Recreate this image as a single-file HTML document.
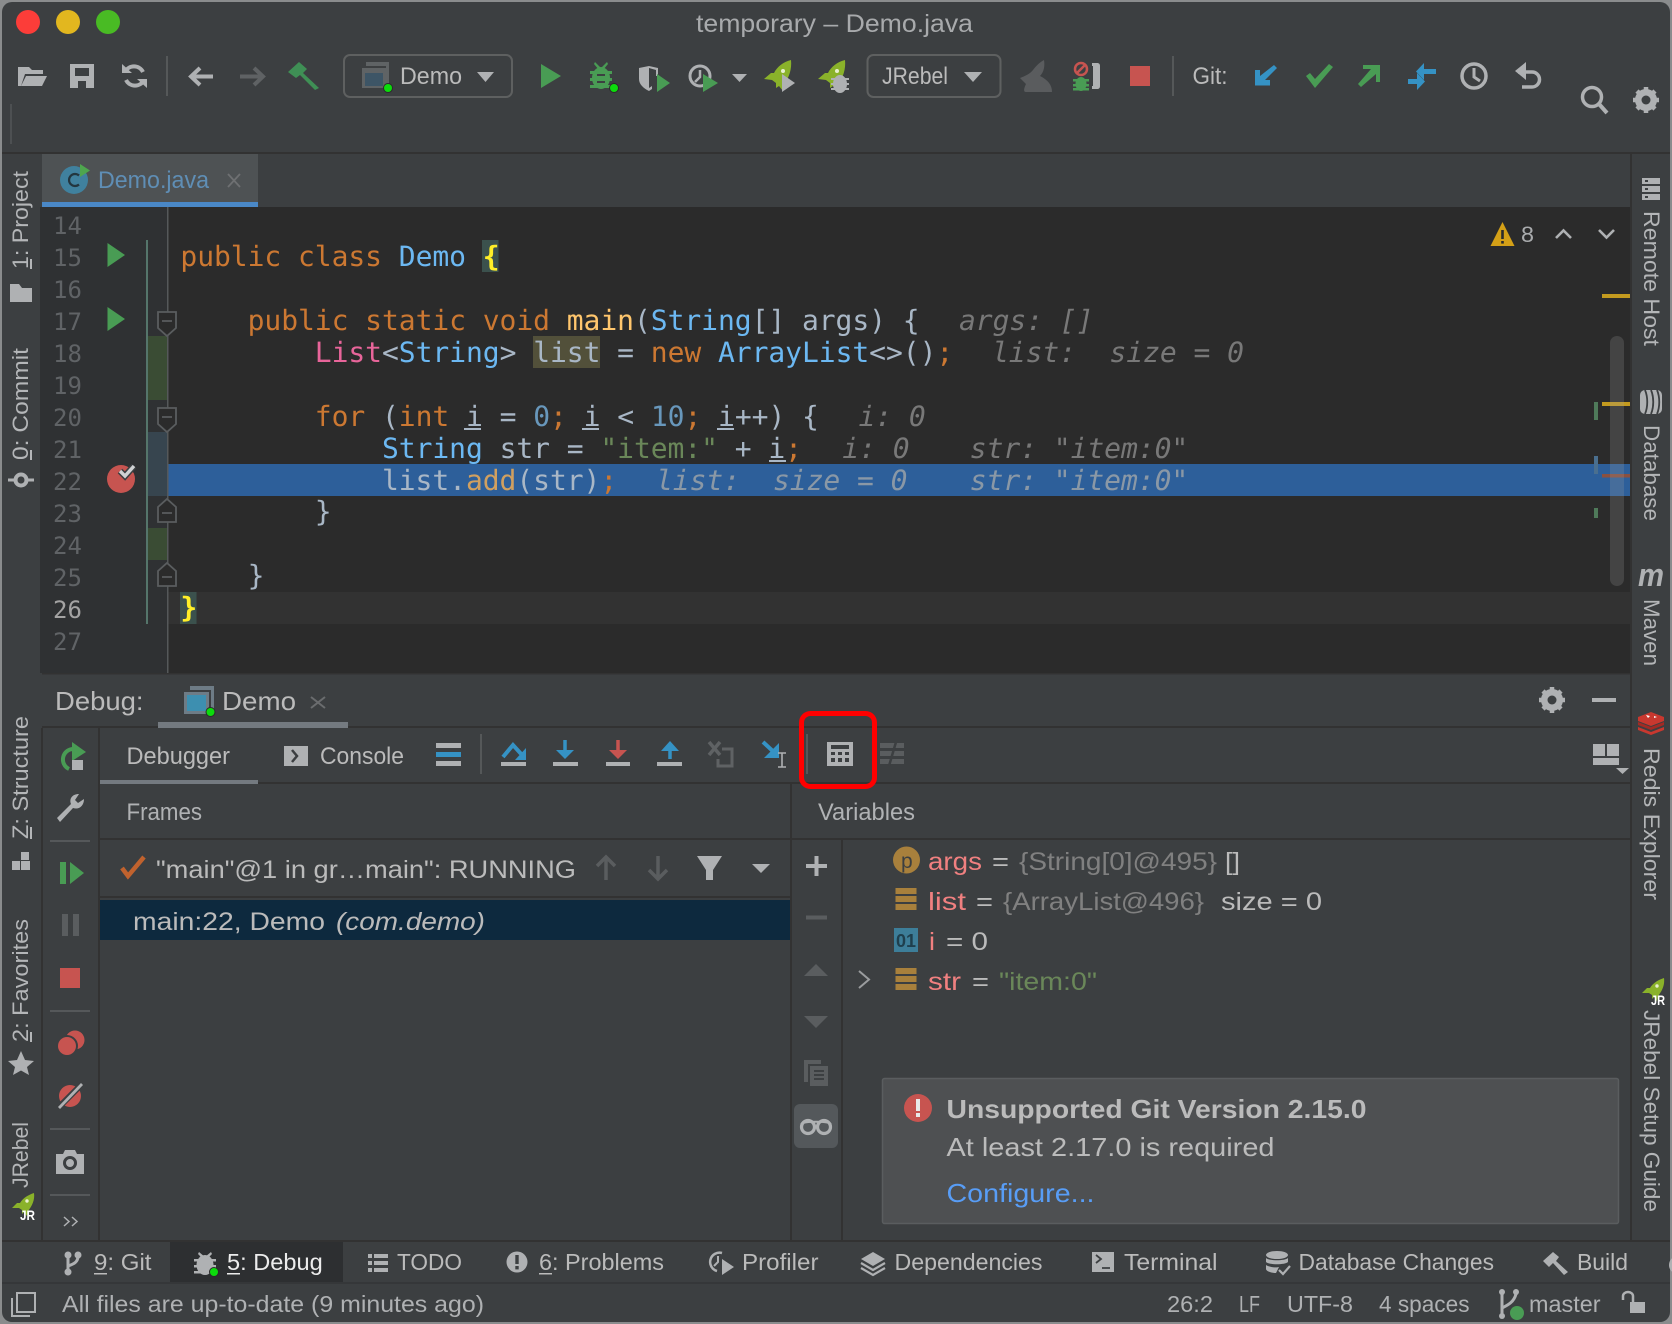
<!DOCTYPE html>
<html><head><meta charset="utf-8"><style>
html,body{margin:0;padding:0;background:#3c3f41;width:1672px;height:1324px;overflow:hidden}
svg{display:block}
text{font-family:"Liberation Sans",sans-serif;font-size:24px;fill:#bbbbbb;white-space:pre}
.c{font-family:"DejaVu Sans Mono","Liberation Mono",monospace;font-size:28px;fill:#a9b7c6;letter-spacing:-.06px;text-rendering:geometricPrecision}
.n{font-family:"DejaVu Sans Mono","Liberation Mono",monospace;font-size:24px;fill:#606366}
.k{fill:#cc7832}.b{fill:#6cb8f2}.p{fill:#e8659a}.f{fill:#ffc66d}.d{fill:#6897bb}.s{fill:#6a8759}.y{fill:#ffef28;font-weight:bold}
.h{fill:#787878;font-style:italic}
.side{font-size:22px;fill:#b4b6b8}
</style></head><body>
<svg width="1672" height="1324" viewBox="0 0 1672 1324" xmlns="http://www.w3.org/2000/svg">
<rect width="1672" height="1324" fill="#8a8c8d"/>
<rect x="2" y="2" width="1668" height="1320" rx="10" fill="#3c3f41"/>

<!-- title bar -->
<circle cx="28" cy="22" r="12" fill="#fc3d39"/><circle cx="68" cy="22" r="12" fill="#e2b71f"/><circle cx="108" cy="22" r="12" fill="#49bb24"/>
<text x="696" y="32" textLength="277" lengthAdjust="spacingAndGlyphs" style="fill:#a8aaac;font-size:25px">temporary – Demo.java</text>

<!-- toolbar -->
<g fill="#afb1b3">
<path d="M18 67h11l3 3h11v4H25l-4 12h-3z"/><path d="M26 76h21l-5 10H21z"/>
<path fill-rule="evenodd" d="M70 64h24v24H70zM75 68v8h14v-8zM78 81v7h8v-7z"/>
<g fill="none" stroke="#afb1b3" stroke-width="4"><path d="M125 72a10 10 0 0 1 18 0"/><path d="M144 80a10 10 0 0 1-18 0"/></g>
<path d="M122 64l10 9h-10zM147 88l-10-9h10z"/>
</g>
<rect x="166" y="56" width="2" height="40" fill="#555859"/>
<path d="M213 76.500H192M200 68l-9 8.500 9 8.500" fill="none" stroke="#afb1b3" stroke-width="4"/>
<path d="M240 76.500h22M254 68l9 8.500-9 8.500" fill="none" stroke="#5f6264" stroke-width="4"/>
<path d="M288 72l11-10 8 7-4 4 16 15-4 2-15-15-4 3z" fill="#3f8f55"/>
<rect x="344" y="55" width="168" height="42" rx="6" fill="none" stroke="#5e6060" stroke-width="2"/>
<path d="M366 62h23v24h-3V66h-20z" fill="#5f6365"/><rect x="362" y="68" width="24" height="20" fill="#5f6365"/><rect x="365" y="73" width="18" height="13" fill="#3d5566"/>
<circle cx="388" cy="88" r="5" fill="#2b2b2b"/><circle cx="388" cy="88" r="4" fill="#0cdc0c"/>
<text x="400" y="84" textLength="62" lengthAdjust="spacingAndGlyphs">Demo</text>
<path d="M477 72h17l-8.500 10z" fill="#afb1b3"/>
<path d="M541 64l20 12-20 12z" fill="#499c54"/>
<g fill="#499c54"><ellipse cx="601" cy="78" rx="9" ry="11"/><rect x="590" y="71" width="22" height="3"/><rect x="590" y="78" width="22" height="3"/><rect x="590" y="85" width="22" height="3"/><path d="M595 62l6 6 6-6 1 2-5 6h-4l-5-6z"/></g>
<rect x="597" y="74" width="8" height="2" fill="#3c3f41"/><rect x="597" y="81" width="8" height="2" fill="#3c3f41"/>
<circle cx="614" cy="88" r="5" fill="#2b2b2b"/><circle cx="614" cy="88" r="4" fill="#0cdc0c"/>
<path d="M639 68l10-2v25c-6-3-10-7-10-12z" fill="#afb1b3"/><path d="M649 66l9 2v8h-2v-6l-7-2z" fill="#afb1b3"/><path d="M649 91l3-2v-3l-3 2z" fill="#afb1b3"/>
<path d="M657 74l13 9-13 9z" fill="#499c54"/>
<circle cx="700" cy="76" r="10" fill="none" stroke="#afb1b3" stroke-width="3"/><path d="M700 70v7l-5 5" fill="none" stroke="#afb1b3" stroke-width="2.500"/>
<path d="M703 74l15 9-15 9z" fill="#499c54"/>
<path d="M732 74h15l-7.500 8z" fill="#afb1b3"/>
<path d="M791 60c1 9-2 18-7 24l-1 7-4-5-3 2 0-5-4-3-8-1 7-6 3 0c3-6 9-11 17-13z" fill="#8ab22a"/><circle cx="783" cy="71" r="2" fill="#e8f0d0"/>
<path d="M782 74l13 9-13 9z" fill="#afb1b3"/>
<path d="M845 60c1 9-2 18-7 24l-1 7-4-5-3 2 0-5-4-3-8-1 7-6 3 0c3-6 9-11 17-13z" fill="#8ab22a"/><circle cx="837" cy="71" r="2" fill="#e8f0d0"/>
<ellipse cx="840" cy="84" rx="7" ry="9" fill="#afb1b3"/><rect x="831" y="78" width="18" height="2" fill="#afb1b3"/><rect x="831" y="83" width="18" height="2" fill="#afb1b3"/><rect x="831" y="88" width="18" height="2" fill="#afb1b3"/>
<rect x="867.500" y="55" width="133" height="42" rx="6" fill="none" stroke="#5e6060" stroke-width="2"/>
<text x="882" y="84" textLength="66" lengthAdjust="spacingAndGlyphs">JRebel</text>
<path d="M964 72h18l-9 10z" fill="#afb1b3"/>
<path d="M1020 78c5-2 10-4 13-8 3-4 7-8 11-10 1 6 0 12-4 16 8 4 12 9 12 16h-26c-3 0-2-4 0-8z" fill="#5a5c5e"/>
<circle cx="1081" cy="69" r="6" fill="none" stroke="#c75450" stroke-width="2.500"/><path d="M1077 73l8-8" stroke="#c75450" stroke-width="2.500"/>
<g fill="#499c54"><ellipse cx="1081" cy="84" rx="5.500" ry="7"/><rect x="1073" y="79" width="16" height="2.500"/><rect x="1073" y="84" width="16" height="2.500"/><rect x="1073" y="88" width="16" height="2.500"/></g>
<path d="M1092 63h5c2 0 3 1 3 3v20c0 2-1 3-3 3h-5v-3h1V66h-1z" fill="#afb1b3"/>
<rect x="1130" y="66" width="20" height="20" fill="#c75450"/>
<rect x="1172" y="56" width="2" height="40" fill="#555859"/>
<text x="1192.500" y="84" textLength="35" lengthAdjust="spacingAndGlyphs">Git:</text>
<path d="M1274 65l3 3-12 12 5 0 0 5.500h-15V70h5v6z" fill="#3592c4"/>
<path d="M1306 76l4-3 5 6 14-15 4 3-18 21z" fill="#499c54"/>
<path d="M1361 87l-3-3 13-15h-8v-4h17v17h-4v-8z" fill="#499c54"/>
<path d="M1424 63v6h12v5h-12v6l-8-8.500zM1417 90v-6h-9v-5h9v-6l8 8.500z" fill="#3592c4"/>
<circle cx="1474" cy="76" r="12" fill="none" stroke="#afb1b3" stroke-width="3.500"/><path d="M1474 68v9l6 4" fill="none" stroke="#afb1b3" stroke-width="3"/>
<path d="M1518 72h14a7.500 7.500 0 0 1 0 15h-10" fill="none" stroke="#afb1b3" stroke-width="3.500"/><path d="M1526 62v18l-11-9z" fill="#afb1b3"/>
<circle cx="1592" cy="97" r="9.500" fill="none" stroke="#afb1b3" stroke-width="3.500"/><path d="M1599 104l8 9" stroke="#afb1b3" stroke-width="4"/>
<circle cx="1646" cy="100" r="8" fill="none" stroke="#afb1b3" stroke-width="6"/>
<path d="M1646 87v26M1633 100h26M1637 91l18 18M1655 91l-18 18" stroke="#afb1b3" stroke-width="4.500"/><circle cx="1646" cy="100" r="4.500" fill="#3c3f41"/>
<rect x="10" y="104" width="2" height="40" fill="#4d5052"/>
<rect x="2" y="152" width="1668" height="2" fill="#323232"/>

<!-- tab -->
<rect x="42" y="154" width="216" height="48" fill="#4e5254"/><rect x="42" y="202" width="216" height="6" fill="#4a88c7"/>
<circle cx="74" cy="180" r="14" fill="#40819e"/><path d="M79 175.500a6 6 0 1 0 0 9" fill="none" stroke="#23363f" stroke-width="2.200"/><path d="M80 164l10 6.500-10 6.500z" fill="#4ea64e"/>
<text x="98" y="188" textLength="111" lengthAdjust="spacingAndGlyphs" style="fill:#5f8eb5">Demo.java</text>
<path d="M228 174l12 13M240 174l-12 13" stroke="#6e7072" stroke-width="1.800"/>

<!-- editor -->
<rect x="40" y="207" width="128" height="466" fill="#2f3133"/>
<rect x="168" y="207" width="1462" height="466" fill="#2b2b2b"/>
<rect x="168" y="592" width="1462" height="32" fill="#323232"/>
<rect x="168" y="464" width="1462" height="32" fill="#2d5f9a"/>
<rect x="148" y="336" width="19" height="64" fill="#3a4c34"/><rect x="148" y="432" width="19" height="64" fill="#37454f"/><rect x="148" y="528" width="19" height="32" fill="#3a4c34"/>
<rect x="146" y="240" width="2" height="384" fill="#55756b"/>
<rect x="167" y="207" width="1.500" height="466" fill="#55585a"/>
<g fill="#2b2b2b" stroke="#5a5d5f" stroke-width="1.800">
<path d="M158 312h18v16l-9 8-9-8z"/><path d="M158 408h18v16l-9 8-9-8z"/><path d="M158 522h18v-15l-9-8-9 8z"/><path d="M158 586h18v-15l-9-8-9 8z"/>
</g>
<g stroke="#5a5d5f" stroke-width="1.800"><path d="M162 321h10M162 417h10M162 513h10M162 577h10"/></g>
<g class="lnums">
<text class="n" x="53" y="234">14</text><text class="n" x="53" y="266">15</text><text class="n" x="53" y="298">16</text><text class="n" x="53" y="330">17</text><text class="n" x="53" y="362">18</text><text class="n" x="53" y="394">19</text><text class="n" x="53" y="426">20</text><text class="n" x="53" y="458">21</text><text class="n" x="53" y="490">22</text><text class="n" x="53" y="522">23</text><text class="n" x="53" y="554">24</text><text class="n" x="53" y="586">25</text><text class="n" x="53" y="618" style="fill:#a4a3a3">26</text><text class="n" x="53" y="650">27</text>
</g>
<path d="M107.500 243l17.500 12-17.500 12zM107.500 307l17.500 12-17.500 12z" fill="#499c54"/>
<circle cx="121" cy="479" r="14" fill="#c75450"/>
<path d="M120 471l5 5 9-10" fill="none" stroke="#3c3f41" stroke-width="6.500"/><path d="M120 471l5 5 9-10" fill="none" stroke="#d0d2d4" stroke-width="3.400"/>
<!-- highlights -->
<rect x="482" y="240" width="16.500" height="32" fill="#3b514d"/>
<rect x="180" y="592" width="16.500" height="32" fill="#3b514d"/>
<rect x="533" y="336" width="67" height="32" fill="#52503a"/>
<!-- code -->
<text class="c" x="180.400" y="266"><tspan class="k">public class </tspan><tspan class="b">Demo </tspan><tspan class="y">{</tspan></text>
<text class="c" x="180.400" y="330">    <tspan class="k">public static void </tspan><tspan class="f">main</tspan>(<tspan class="b">String</tspan>[] args) {</text>
<text class="c h" x="959" y="330">args: []</text>
<text class="c" x="180.400" y="362">        <tspan class="p">List</tspan>&lt;<tspan class="b">String</tspan>&gt; list = <tspan class="k">new </tspan><tspan class="b">ArrayList</tspan>&lt;&gt;()<tspan class="k">;</tspan></text>
<text class="c h" x="992" y="362">list:</text><text class="c h" x="1109.500" y="362">size = 0</text>
<text class="c" x="180.400" y="426">        <tspan class="k">for</tspan> (<tspan class="k">int</tspan> i = <tspan class="d">0</tspan><tspan class="k">;</tspan> i &lt; <tspan class="d">10</tspan><tspan class="k">;</tspan> i++) {</text>
<text class="c h" x="858.500" y="426">i: 0</text>
<text class="c" x="180.400" y="458">            <tspan class="b">String</tspan> str = <tspan class="s">"item:"</tspan> + i<tspan class="k">;</tspan></text>
<text class="c h" x="842.300" y="458">i: 0</text><text class="c h" x="969.800" y="458">str: "item:0"</text>
<text class="c" x="180.400" y="490">            list.<tspan style="fill:#d0a060">add</tspan>(str)<tspan class="k">;</tspan></text>
<text class="c h" x="656" y="490" style="fill:#8a98a6">list:</text><text class="c h" x="773" y="490" style="fill:#8a98a6">size = 0</text><text class="c h" x="969.800" y="490" style="fill:#8a98a6">str: "item:0"</text>
<text class="c" x="180.400" y="521">        }</text>
<text class="c" x="180.400" y="585">    }</text>
<text class="c y" x="180.400" y="617">}</text>
<g fill="#a9b7c6"><rect x="464" y="428" width="17" height="2"/><rect x="582" y="428" width="17" height="2"/><rect x="717" y="428" width="17" height="2"/><rect x="769" y="460" width="17" height="2"/></g>
<!-- marks -->
<path d="M1502.500 222l12 24h-24z" fill="#d4a017"/><rect x="1501.200" y="230" width="2.600" height="9" fill="#2b2b2b"/><rect x="1501.200" y="241" width="2.600" height="2.600" fill="#2b2b2b"/>
<text x="1521" y="242" style="font-size:22px;fill:#a9abad" textLength="13" lengthAdjust="spacingAndGlyphs">8</text>
<path d="M1556 238l7.500-7.500 7.500 7.500M1599 230l7.500 7.500 7.500-7.500" fill="none" stroke="#afb1b3" stroke-width="2.600"/>
<rect x="1602" y="294" width="28" height="4" fill="#c39a1f"/><rect x="1602" y="402" width="28" height="4" fill="#c39a1f"/><rect x="1602" y="474" width="28" height="3.500" fill="#8a5040"/>
<rect x="1594" y="402" width="4" height="18" fill="#4f7a5a"/><rect x="1594" y="456" width="4" height="18" fill="#4a6f8f"/><rect x="1594" y="508" width="4" height="10" fill="#4f7a5a"/>
<rect x="1610" y="336" width="14" height="250" rx="7" fill="#a0a0a0" opacity=".22"/>

<!-- side borders -->
<rect x="1630" y="154" width="2" height="1086" fill="#323232"/>

<!-- left stripe -->
<text class="side" transform="translate(28,269) rotate(-90)" textLength="98" lengthAdjust="spacingAndGlyphs">1: Project</text>
<rect x="30" y="259" width="2" height="10" fill="#b4b6b8"/>
<path d="M10 284h9l3 4h10v14H10z" fill="#afb1b3"/>
<text class="side" transform="translate(28,460) rotate(-90)" textLength="112" lengthAdjust="spacingAndGlyphs">0: Commit</text>
<rect x="30" y="450" width="2" height="10" fill="#b4b6b8"/>
<circle cx="21" cy="480" r="5.500" fill="none" stroke="#afb1b3" stroke-width="4"/><rect x="8" y="478.500" width="26" height="3" fill="#afb1b3"/>
<circle cx="21" cy="480" r="3.500" fill="#3c3f41"/>
<text class="side" transform="translate(28,839) rotate(-90)" textLength="123" lengthAdjust="spacingAndGlyphs">Z: Structure</text>
<rect x="30" y="827" width="2" height="12" fill="#b4b6b8"/>
<path d="M21 852h8v8h-8zM12 861h8v9h-8zM21 861h9v9h-9z" fill="#afb1b3"/>
<text class="side" transform="translate(28,1042) rotate(-90)" textLength="123" lengthAdjust="spacingAndGlyphs">2: Favorites</text>
<rect x="30" y="1032" width="2" height="10" fill="#b4b6b8"/>
<path d="M21 1051l4 9 9 1-7 6 2 8-8-4.500-8 4.500 2-8-7-6 9-1z" fill="#afb1b3"/>
<text class="side" transform="translate(28,1188) rotate(-90)" textLength="66" lengthAdjust="spacingAndGlyphs">JRebel</text>
<path d="M34 1193c1 7-2 13-6 18l-1 5-3-4-2 2v-4l-3-2-7 0 5-5 3 0c3-5 8-8 14-10z" fill="#8ab22a"/><circle cx="27" cy="1201" r="1.700" fill="#e8f0d0"/>
<text x="20" y="1220" style="font-size:14px;fill:#fff;font-weight:bold" textLength="15" lengthAdjust="spacingAndGlyphs">JR</text>

<!-- right stripe -->
<g fill="#afb1b3"><rect x="1642" y="178" width="18" height="6"/><rect x="1642" y="186" width="18" height="6"/><rect x="1642" y="194" width="18" height="6"/></g>
<g fill="#3c3f41"><rect x="1645" y="180" width="3" height="2"/><rect x="1645" y="188" width="3" height="2"/><rect x="1645" y="196" width="3" height="2"/></g>
<text class="side" transform="translate(1644,211) rotate(90)" textLength="135" lengthAdjust="spacingAndGlyphs">Remote Host</text>
<rect x="1640" y="390" width="22" height="24" rx="5" fill="#afb1b3"/><path d="M1645 390c3 7 3 17 0 24M1651 390c3 7 3 17 0 24M1657 390c3 7 3 17 0 24" fill="none" stroke="#3c3f41" stroke-width="1.800"/>
<text class="side" transform="translate(1644,425) rotate(90)" textLength="96" lengthAdjust="spacingAndGlyphs">Database</text>
<text x="1638" y="586" style="font-family:'Liberation Sans',sans-serif;font-style:italic;font-weight:bold;font-size:32px;fill:#afb1b3" textLength="26" lengthAdjust="spacingAndGlyphs">m</text>
<text class="side" transform="translate(1644,599) rotate(90)" textLength="67" lengthAdjust="spacingAndGlyphs">Maven</text>
<path d="M1651 712l13 5v4l-13 5-13-5v-4z" fill="#c8382f"/><path d="M1638 722l13 5 13-5v3l-13 5-13-5z" fill="#a32a24"/><path d="M1638 727l13 5 13-5v3l-13 5-13-5z" fill="#c8382f"/><path d="M1646 715l4 1-2 2zM1654 716l3 1-3 1z" fill="#fff"/>
<text class="side" transform="translate(1644,748) rotate(90)" textLength="152" lengthAdjust="spacingAndGlyphs">Redis Explorer</text>
<path d="M1664 978c1 7-2 13-6 18l-1 5-3-4-2 2v-4l-3-2-7 0 5-5 3 0c3-5 8-8 14-10z" fill="#8ab22a"/><circle cx="1657" cy="986" r="1.700" fill="#e8f0d0"/>
<text x="1651" y="1005" style="font-size:14px;fill:#fff;font-weight:bold" textLength="14" lengthAdjust="spacingAndGlyphs">JR</text>
<text class="side" transform="translate(1644,1010) rotate(90)" textLength="202" lengthAdjust="spacingAndGlyphs">JRebel Setup Guide</text>

<!-- debug panel -->
<rect x="42" y="673" width="1588" height="1.500" fill="#323232"/>
<rect x="42" y="726" width="1588" height="2" fill="#323232"/>
<text x="55" y="710" style="font-size:26px" textLength="88.500" lengthAdjust="spacingAndGlyphs">Debug:</text>
<path d="M190 686h24v26h-3v-22h-21z" fill="#6e7c86"/><rect x="184" y="692" width="25" height="22" fill="#6e7c86"/><rect x="187" y="695" width="19" height="16" fill="#3d8fb0"/>
<circle cx="210.500" cy="712" r="5" fill="#2b2b2b"/><circle cx="210.500" cy="712" r="4" fill="#0cdc0c"/>
<text x="222" y="710" style="font-size:26px" textLength="74" lengthAdjust="spacingAndGlyphs">Demo</text>
<path d="M311 697l14 11M325 697l-14 11" stroke="#6a6c6e" stroke-width="2"/>
<rect x="158" y="722" width="190" height="6" fill="#747a80"/>
<circle cx="1552" cy="700" r="8" fill="none" stroke="#afb1b3" stroke-width="6"/><path d="M1552 687v26M1539 700h26M1543 691l18 18M1561 691l-18 18" stroke="#afb1b3" stroke-width="4.500"/><circle cx="1552" cy="700" r="4.500" fill="#3c3f41"/>
<rect x="1592" y="698" width="24" height="4" fill="#afb1b3"/>

<!-- columns -->
<rect x="41" y="728" width="2" height="512" fill="#323232"/><rect x="98" y="728" width="2" height="512" fill="#323232"/>
<rect x="100" y="782" width="1530" height="2" fill="#323232"/>
<rect x="790" y="784" width="2" height="456" fill="#323232"/>
<rect x="100" y="838" width="1530" height="2" fill="#323232"/>
<rect x="841" y="840" width="2" height="400" fill="#323232"/>
<rect x="100" y="896" width="690" height="2" fill="#323232"/>

<!-- debug left icons -->
<path d="M74 749a10.500 10.500 0 0 0-5 20" fill="none" stroke="#499c54" stroke-width="4"/><path d="M72 742l14 10-14 9z" fill="#499c54"/><rect x="72" y="760" width="11" height="10" fill="#afb1b3"/>
<path d="M57 818l14-14c-2-5 1-10 8-10l-4 6 3 3 6-4c0 7-5 11-11 9l-13 14z" fill="#afb1b3"/>
<rect x="50" y="840" width="40" height="2" fill="#55585a"/>
<rect x="60" y="862" width="6" height="22" fill="#499c54"/><path d="M70 862l14 11-14 11z" fill="#499c54"/>
<path d="M62 914h6v22h-6zM73 914h6v22h-6z" fill="#5a5d5f"/>
<rect x="60" y="968" width="20" height="20" fill="#c75450"/>
<rect x="50" y="1010" width="40" height="2" fill="#55585a"/>
<circle cx="75" cy="1040" r="9.500" fill="#c75450"/><circle cx="67" cy="1046" r="11" fill="#3c3f41"/><circle cx="67" cy="1046" r="9" fill="#c75450"/>
<circle cx="70" cy="1096" r="11" fill="#c75450"/><path d="M59 1107l23-23" stroke="#3c3f41" stroke-width="6"/><path d="M59 1108l23-24" stroke="#afb1b3" stroke-width="2.800"/>
<rect x="50" y="1128" width="40" height="2" fill="#55585a"/>
<path d="M56 1154h7l2-4h10l2 4h7v20H56z" fill="#afb1b3"/><circle cx="70" cy="1163" r="5.500" fill="none" stroke="#3c3f41" stroke-width="3"/>
<rect x="50" y="1194" width="40" height="2" fill="#55585a"/>
<path d="M64 1217l5 4.500-5 4.500M72 1217l5 4.500-5 4.500" fill="none" stroke="#afb1b3" stroke-width="1.500"/>

<!-- debugger toolbar -->
<text x="126.500" y="764" textLength="103.500" lengthAdjust="spacingAndGlyphs">Debugger</text>
<rect x="100" y="780" width="158" height="4" fill="#747a80"/>
<rect x="284" y="746" width="24" height="20" fill="#afb1b3"/><path d="M292 750l5 6-5 6" fill="none" stroke="#3c3f41" stroke-width="2.500"/>
<text x="320" y="764" textLength="84" lengthAdjust="spacingAndGlyphs">Console</text>
<rect x="436" y="743" width="25" height="5" fill="#afb1b3"/><rect x="436" y="752" width="25" height="5" fill="#3592c4"/><rect x="436" y="761" width="25" height="5" fill="#afb1b3"/>
<rect x="480" y="734" width="2" height="40" fill="#555859"/>
<path d="M503 757l10-12 10 11" fill="none" stroke="#3592c4" stroke-width="4"/><path d="M526 748v12h-11z" fill="#3592c4"/><rect x="501" y="762" width="25" height="4" fill="#afb1b3"/>
<path d="M565 740v14" stroke="#3592c4" stroke-width="3.500"/><path d="M556 750h18l-9 9z" fill="#3592c4"/><rect x="553" y="762" width="25" height="4" fill="#afb1b3"/>
<path d="M618 740v14" stroke="#c75450" stroke-width="3.500"/><path d="M609 750h18l-9 9z" fill="#c75450"/><rect x="606" y="762" width="24" height="4" fill="#afb1b3"/>
<path d="M670 744v15" stroke="#3592c4" stroke-width="3.500"/><path d="M661 751h18l-9-10z" fill="#3592c4"/><rect x="657" y="762" width="25" height="4" fill="#afb1b3"/>
<path d="M709 742l11 13M720 742l-11 13" stroke="#5f6264" stroke-width="3.500"/><path d="M722 749h10v17h-14v-7" fill="none" stroke="#5f6264" stroke-width="3"/>
<path d="M763 742l14 13" stroke="#3592c4" stroke-width="4"/><path d="M779 743v15h-15z" fill="#3592c4"/>
<path d="M778 753h8M778 767h8M782 753v14" stroke="#afb1b3" stroke-width="1.600" fill="none"/>
<rect x="806" y="734" width="2" height="40" fill="#555859"/>
<rect x="827" y="742" width="26" height="24" fill="#afb1b3"/><rect x="831" y="745" width="18" height="4" fill="#3c3f41"/>
<g fill="#3c3f41"><rect x="831" y="752" width="4" height="3"/><rect x="838" y="752" width="4" height="3"/><rect x="845" y="752" width="4" height="3"/><rect x="831" y="758" width="4" height="4"/><rect x="838" y="758" width="4" height="4"/><rect x="845" y="758" width="4" height="4"/></g>
<rect x="801.500" y="713.500" width="73" height="73" rx="9" fill="none" stroke="#ff0000" stroke-width="5"/>
<g fill="#5a5d5f"><rect x="880" y="743" width="24" height="5"/><rect x="880" y="751" width="24" height="5"/><rect x="880" y="759" width="24" height="5"/></g>
<path d="M889 766l7-24" stroke="#3c3f41" stroke-width="2.500"/>
<rect x="1593" y="744" width="12" height="12" fill="#afb1b3"/><rect x="1607" y="744" width="12" height="12" fill="#afb1b3"/><rect x="1593" y="758" width="26" height="7" fill="#afb1b3"/>
<path d="M1616 768h13l-6.500 6z" fill="#afb1b3"/>

<!-- frames -->
<text x="126.500" y="820" textLength="75.500" lengthAdjust="spacingAndGlyphs" style="fill:#b0b2b4">Frames</text>
<path d="M122 868l6 8 16-19" fill="none" stroke="#c0622e" stroke-width="4.500"/>
<text x="156" y="878" textLength="420" lengthAdjust="spacingAndGlyphs" style="font-size:25px">"main"@1 in gr…main": RUNNING</text>
<path d="M606 858v22M597 866l9-9 9 9" fill="none" stroke="#5a5d5f" stroke-width="3.500"/>
<path d="M658 856v22M649 870l9 9 9-9" fill="none" stroke="#5a5d5f" stroke-width="3.500"/>
<path d="M697 856h25l-9 14v10h-7v-10z" fill="#afb1b3"/>
<path d="M752 864h18l-9 9z" fill="#afb1b3"/>
<rect x="100" y="900" width="690" height="40" fill="#0d293e"/>
<text x="133" y="930" textLength="192" lengthAdjust="spacingAndGlyphs" style="font-size:25px">main:22, Demo</text>
<text x="336" y="930" textLength="149" lengthAdjust="spacingAndGlyphs" style="font-size:25px;font-style:italic">(com.demo)</text>

<!-- variables -->
<text x="818" y="820" textLength="97" lengthAdjust="spacingAndGlyphs" style="fill:#b0b2b4">Variables</text>
<path d="M806 866h21M816.500 856v20" stroke="#afb1b3" stroke-width="4"/>
<rect x="806" y="915.500" width="21" height="4" fill="#5a5d5f"/>
<path d="M816 964l12 12h-24zM816 1028l12-12h-24z" fill="#5a5d5f"/>
<path d="M804 1060h17v4h-13v18h-4z" fill="#5a5d5f"/><rect x="810" y="1066" width="18" height="20" fill="#5a5d5f"/><path d="M814 1071h10M814 1075h10M814 1079h10" stroke="#3c3f41" stroke-width="2"/>
<rect x="794" y="1104" width="44" height="44" rx="6" fill="#54585b"/>
<circle cx="808" cy="1127" r="6.500" fill="none" stroke="#afb1b3" stroke-width="3.200"/><circle cx="824" cy="1127" r="6.500" fill="none" stroke="#afb1b3" stroke-width="3.200"/><path d="M801 1124c4-3 26-3 30 0" fill="none" stroke="#afb1b3" stroke-width="2"/>

<circle cx="906.500" cy="860" r="13.500" fill="#a8803c"/><text x="901" y="868" style="font-size:21px;fill:#3c3f41">p</text>
<text x="928" y="870" textLength="54" lengthAdjust="spacingAndGlyphs" style="font-size:25px;fill:#f08080">args</text>
<text x="992" y="870" textLength="17" lengthAdjust="spacingAndGlyphs" style="font-size:25px">=</text>
<text x="1019" y="870" textLength="198" lengthAdjust="spacingAndGlyphs" style="font-size:25px;fill:#808080">{String[0]@495}</text>
<text x="1225" y="870" textLength="15" lengthAdjust="spacingAndGlyphs" style="font-size:25px">[]</text>

<g fill="#a8803c"><rect x="895.500" y="888" width="21" height="6"/><rect x="895.500" y="896" width="21" height="6"/><rect x="895.500" y="904" width="21" height="6"/></g>
<text x="928" y="910" textLength="38" lengthAdjust="spacingAndGlyphs" style="font-size:25px;fill:#f08080">list</text>
<text x="976" y="910" textLength="17" lengthAdjust="spacingAndGlyphs" style="font-size:25px">=</text>
<text x="1003" y="910" textLength="201" lengthAdjust="spacingAndGlyphs" style="font-size:25px;fill:#808080">{ArrayList@496}</text>
<text x="1221" y="910" textLength="101" lengthAdjust="spacingAndGlyphs" style="font-size:25px">size = 0</text>

<rect x="894" y="928" width="24" height="24" fill="#3d7e99"/><text x="896" y="947" textLength="20" lengthAdjust="spacingAndGlyphs" style="font-size:18px;font-weight:bold;fill:#1f3f4d">01</text>
<text x="929" y="950" textLength="6" lengthAdjust="spacingAndGlyphs" style="font-size:25px;fill:#f08080">i</text>
<text x="946" y="950" textLength="42" lengthAdjust="spacingAndGlyphs" style="font-size:25px">= 0</text>

<path d="M859 971l10 8.500-10 8.500" fill="none" stroke="#9a9c9e" stroke-width="2"/>
<g fill="#a8803c"><rect x="895.500" y="968" width="21" height="6"/><rect x="895.500" y="976" width="21" height="6"/><rect x="895.500" y="984" width="21" height="6"/></g>
<text x="928" y="990" textLength="33" lengthAdjust="spacingAndGlyphs" style="font-size:25px;fill:#f08080">str</text>
<text x="972" y="990" textLength="17" lengthAdjust="spacingAndGlyphs" style="font-size:25px">=</text>
<text x="999" y="990" textLength="98" lengthAdjust="spacingAndGlyphs" style="font-size:25px;fill:#6a8759">"item:0"</text>

<!-- notification -->
<rect x="882.500" y="1078.500" width="736" height="145" rx="2" fill="#4e5052" stroke="#5a5d5f" stroke-width="1.500"/>
<circle cx="918" cy="1108" r="14" fill="#c75450"/><rect x="916" y="1099" width="4" height="12" fill="#e8e8e8"/><rect x="916" y="1113" width="4" height="4" fill="#e8e8e8"/>
<text x="946.500" y="1118" textLength="420" lengthAdjust="spacingAndGlyphs" style="font-size:26px;font-weight:bold">Unsupported Git Version 2.15.0</text>
<text x="946.500" y="1156" textLength="328" lengthAdjust="spacingAndGlyphs" style="font-size:26px">At least 2.17.0 is required</text>
<text x="946.500" y="1202" textLength="148" lengthAdjust="spacingAndGlyphs" style="font-size:26px;fill:#589df6">Configure...</text>

<!-- bottom toolbar -->
<rect x="2" y="1240" width="1668" height="2" fill="#323232"/>
<rect x="170" y="1242" width="173" height="40" fill="#2d2f31"/>
<rect x="2" y="1282" width="1668" height="2" fill="#353739"/>
<g fill="none" stroke="#afb1b3" stroke-width="3"><path d="M68 1256v15M68 1266c6-2 10-4 10-10"/></g><circle cx="68" cy="1255" r="3.500" fill="#afb1b3"/><circle cx="78" cy="1255" r="3.500" fill="#afb1b3"/><circle cx="68" cy="1272" r="3.500" fill="#afb1b3"/>
<text x="94" y="1270" textLength="57.500" lengthAdjust="spacingAndGlyphs" style="font-size:23px">9: Git</text><rect x="94" y="1273" width="13" height="1.500" fill="#bbb"/>
<g fill="#afb1b3"><ellipse cx="205" cy="1265" rx="8.500" ry="10"/><rect x="194" y="1259" width="22" height="2.500"/><rect x="194" y="1265" width="22" height="2.500"/><rect x="194" y="1271" width="22" height="2.500"/><path d="M199 1252l6 5 6-5 1 2-5 5h-4l-5-5z"/></g>
<circle cx="214" cy="1272" r="5" fill="#2b2b2b"/><circle cx="214" cy="1272" r="4" fill="#0cdc0c"/>
<text x="227" y="1270" textLength="95.700" lengthAdjust="spacingAndGlyphs" style="font-size:23px;fill:#ececec">5: Debug</text><rect x="227" y="1273" width="13" height="1.500" fill="#ececec"/>
<g fill="#afb1b3"><rect x="368" y="1254" width="4" height="4"/><rect x="374" y="1254" width="14" height="4"/><rect x="368" y="1261" width="4" height="4"/><rect x="374" y="1261" width="14" height="4"/><rect x="368" y="1268" width="4" height="4"/><rect x="374" y="1268" width="14" height="4"/></g>
<text x="397" y="1270" textLength="65" lengthAdjust="spacingAndGlyphs" style="font-size:23px">TODO</text>
<circle cx="517" cy="1262" r="10.500" fill="#afb1b3"/><rect x="515.300" y="1255" width="3.400" height="9" fill="#3c3f41"/><rect x="515.300" y="1266" width="3.400" height="3.400" fill="#3c3f41"/>
<text x="539" y="1270" textLength="125" lengthAdjust="spacingAndGlyphs" style="font-size:23px">6: Problems</text><rect x="539" y="1273" width="13" height="1.500" fill="#bbb"/>
<path d="M722 1253a9 9 0 1 0-5 18" fill="none" stroke="#afb1b3" stroke-width="2.500"/><path d="M718 1256v6l-4 4" fill="none" stroke="#afb1b3" stroke-width="2"/><path d="M722 1259l12 8-12 8z" fill="#afb1b3"/>
<text x="742" y="1270" textLength="76.500" lengthAdjust="spacingAndGlyphs" style="font-size:23px">Profiler</text>
<path d="M873 1252l12 7-12 7-12-7z" fill="#afb1b3"/><path d="M861 1263l12 7 12-7M861 1268l12 7 12-7" fill="none" stroke="#afb1b3" stroke-width="2.200"/>
<text x="894.500" y="1270" textLength="148" lengthAdjust="spacingAndGlyphs" style="font-size:23px">Dependencies</text>
<rect x="1092" y="1252" width="22" height="20" fill="#afb1b3"/><path d="M1096 1255l5 4-5 4M1102 1268h8" fill="none" stroke="#3c3f41" stroke-width="1.800"/>
<text x="1124" y="1270" textLength="93.500" lengthAdjust="spacingAndGlyphs" style="font-size:23px">Terminal</text>
<g fill="#afb1b3"><ellipse cx="1277" cy="1255" rx="11" ry="4"/><path d="M1266 1258c3 3 19 3 22 0v4c-3 3-19 3-22 0zM1266 1265c3 2 10 3 13 2l-3 6c-5 0-10-2-10-4z"/></g><path d="M1279 1270l4 4 7-8" fill="none" stroke="#afb1b3" stroke-width="2.200"/>
<text x="1298.500" y="1270" textLength="195.500" lengthAdjust="spacingAndGlyphs" style="font-size:23px">Database Changes</text>
<path d="M1543 1261l10-9 6 5-3 4 12 11-4 3-11-12-4 4z" fill="#afb1b3"/>
<text x="1577" y="1270" textLength="51" lengthAdjust="spacingAndGlyphs" style="font-size:23px">Build</text>
<circle cx="1678" cy="1265" r="9" fill="#afb1b3"/>

<!-- status bar -->
<path d="M12 1298v18h18" fill="none" stroke="#afb1b3" stroke-width="2"/><rect x="17" y="1293" width="18" height="19" fill="none" stroke="#afb1b3" stroke-width="2"/>
<text x="62" y="1312" textLength="422" lengthAdjust="spacingAndGlyphs" style="font-size:23px;fill:#afb1b3">All files are up-to-date (9 minutes ago)</text>
<text x="1167" y="1312" textLength="46" lengthAdjust="spacingAndGlyphs" style="font-size:23px;fill:#afb1b3">26:2</text>
<text x="1239" y="1312" textLength="21" lengthAdjust="spacingAndGlyphs" style="font-size:23px;fill:#afb1b3">LF</text>
<text x="1287" y="1312" textLength="66" lengthAdjust="spacingAndGlyphs" style="font-size:23px;fill:#afb1b3">UTF-8</text>
<text x="1379" y="1312" textLength="90.500" lengthAdjust="spacingAndGlyphs" style="font-size:23px;fill:#afb1b3">4 spaces</text>
<g fill="none" stroke="#afb1b3" stroke-width="3"><path d="M1502 1293v22M1502 1308c6-3 12-6 14-14"/></g><circle cx="1502" cy="1292" r="3" fill="#afb1b3"/><circle cx="1516" cy="1292" r="3" fill="#afb1b3"/><circle cx="1502" cy="1316" r="3" fill="#afb1b3"/>
<circle cx="1517" cy="1313" r="7" fill="#499c54"/>
<text x="1529" y="1312" textLength="71.500" lengthAdjust="spacingAndGlyphs" style="font-size:23px;fill:#afb1b3">master</text>
<rect x="1630" y="1302" width="15" height="11" fill="#afb1b3"/><path d="M1623 1300v-4a5 4 0 0 1 10 0v6" fill="none" stroke="#afb1b3" stroke-width="2.500"/>
</svg>
</body></html>
